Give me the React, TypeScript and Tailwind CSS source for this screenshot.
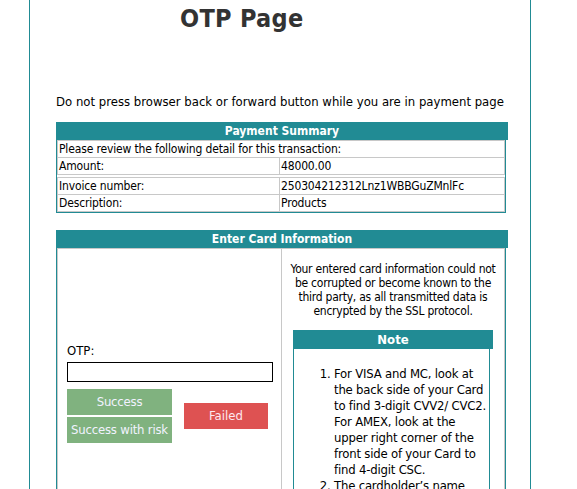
export default function App() {
  const summary = [
    { label: "Amount:", value: "48000.00" },
    { label: "Invoice number:", value: "250304212312Lnz1WBBGuZMnlFc" },
    { label: "Description:", value: "Products" },
  ];

  return (
    <div
      className="h-screen overflow-hidden bg-white text-black"
      style={{ fontFamily: '"DejaVu Sans Condensed", "DejaVu Sans", sans-serif' }}
    >
      <div className="ml-[29px] w-[502px] min-h-[489px] border-x border-[#218b94]">
        {/* title */}
        <h1 className="pl-[150px] pt-[4px] text-[25px] leading-[30px] font-bold tracking-[0.3px] text-[#333]">
          OTP Page
        </h1>

        <p className="mt-[60px] text-center text-[13px] leading-[16px]">
          Do not press browser back or forward button while you are in payment page
        </p>

        {/* payment summary */}
        <div className="ml-[26px] mt-[12px] w-[452px]">
          <div className="h-[18px] bg-[#218b94] text-center text-[12px] leading-[18px] font-bold text-white">
            Payment Summary
          </div>
          <div className="w-[450px] border border-t-0 border-[#218b94] text-[12px] leading-[16px] tracking-[-0.15px]">
            <div className="border border-[#c8c8c8] px-[1px]">
              Please review the following detail for this transaction:
            </div>
            {summary.map((row, i) => (
              <div
                key={row.label}
                className={
                  "grid grid-cols-[223px_1fr] " + (i === 1 ? "mt-[2px] border-t border-[#c8c8c8]" : "")
                }
              >
                <div className="border-x border-b border-[#c8c8c8] px-[1px]">{row.label}</div>
                <div className="border-r border-b border-[#c8c8c8] px-[1px]">{row.value}</div>
              </div>
            ))}
          </div>
        </div>

        {/* card info */}
        <div className="ml-[26px] mt-[17px] w-[452px]">
          <div className="h-[18px] bg-[#218b94] text-center text-[12px] leading-[18px] font-bold text-white">
            Enter Card Information
          </div>
          <div className="w-[450px] border border-t-0 border-[#218b94]">
            <div className="grid grid-cols-[224px_1fr] border border-[#c8c8c8]">
              <div className="border-r border-[#c8c8c8] pl-[9px] pt-[94px] pb-[60px]">
                <label className="block text-[13px] leading-[16px]">OTP:</label>
                <input
                  type="text"
                  className="mt-[3px] block h-[20px] w-[206px] border border-black bg-white outline-none"
                />
                <div className="mt-[7px] flex items-center gap-[12px]">
                  <div className="flex flex-col gap-[2px]">
                    <button className="h-[26px] w-[105px] bg-[#80b27f] text-[13px] tracking-[-0.2px] text-[#f2f2ff]">
                      Success
                    </button>
                    <button className="h-[26px] w-[105px] bg-[#80b27f] text-[13px] tracking-[-0.2px] text-[#f2f2ff]">
                      Success with risk
                    </button>
                  </div>
                  <button className="h-[26px] w-[84px] bg-[#de5252] text-[13px] text-[#fde8f0]">
                    Failed
                  </button>
                </div>
              </div>

              <div className="px-[11px] pt-[13px]">
                <p className="-mx-[6px] text-center text-[12px] leading-[14px] tracking-[-0.25px]">
                  Your entered card information could not be corrupted or become known to the third
                  party, as all transmitted data is encrypted by the SSL protocol.
                </p>
                <div className="mt-[12px] w-[200px]">
                  <div className="h-[19px] bg-[#218b94] text-center text-[13px] leading-[19px] font-bold text-white">
                    Note
                  </div>
                  <div className="w-[197px] border border-t-0 border-[#218b94] pt-[17px] pb-[10px]">
                    <ol className="list-decimal pl-[40px] text-[13px] leading-[16px] tracking-[-0.2px]">
                      <li>
                        For VISA and MC, look at the back side of your Card to find 3-digit CVV2/
                        CVC2. For AMEX, look at the upper right corner of the front side of your
                        Card to find 4-digit CSC.
                      </li>
                      <li>
                        The cardholder’s name should be entered exactly as it is printed on the
                        card.
                      </li>
                    </ol>
                  </div>
                </div>
              </div>
            </div>
          </div>
        </div>
      </div>
    </div>
  );
}
